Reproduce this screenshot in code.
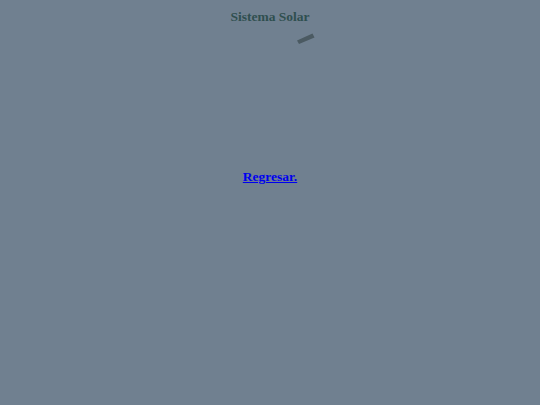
export default function App() {
  return (
    <div className="relative min-h-[405px] w-full bg-[#708090] font-['Liberation_Serif',serif] text-[13.5px]">
      <h1 className="pt-[9px] text-center text-[13.5px] font-bold leading-[15px] text-[#2f4f4f]">Sistema Solar</h1>
      <svg className="absolute left-[296px] top-[33px]" width="20" height="12" viewBox="0 0 20 12">
        <polygon points="1,7.5 3,11 18.5,4.5 16.5,0.5" fill="#4b5a62" />
      </svg>
      <div className="mt-[145px] text-center leading-[15px]">
        <a href="#" className="font-bold text-[#0000ee] underline">Regresar.</a>
      </div>
    </div>
  );
}
